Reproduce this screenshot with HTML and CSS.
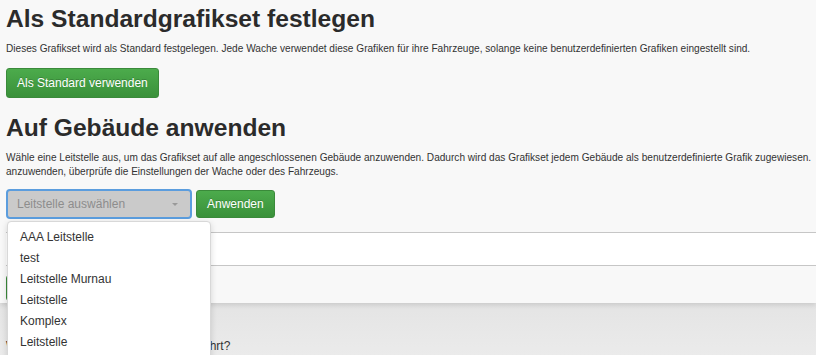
FILE: index.html
```html
<!DOCTYPE html>
<html lang="de">
<head>
    <meta charset="UTF-8">
    <title>Grafikset</title>
    <link rel="stylesheet" href="styles.css">
</head>
<body>
    <div class="page">
        <h1>Als Standardgrafikset festlegen</h1>
        <p class="text">Dieses Grafikset wird als Standard festgelegen. Jede Wache verwendet diese Grafiken für ihre Fahrzeuge, solange keine benutzerdefinierten Grafiken eingestellt sind.</p>
        <button class="btn btn-success">Als Standard verwenden</button>

        <h2 class="section-title">Auf Gebäude anwenden</h2>
        <p class="text">Wähle eine Leitstelle aus, um das Grafikset auf alle angeschlossenen Gebäude anzuwenden. Dadurch wird das Grafikset jedem Gebäude als benutzerdefinierte Grafik zugewiesen.<br>anzuwenden, überprüfe die Einstellungen der Wache oder des Fahrzeugs.</p>

        <div class="apply-row">
            <div class="select-wrap">
                <div class="select">
                    <span class="placeholder">Leitstelle auswählen</span>
                    <span class="caret"></span>
                </div>
                <ul class="dropdown">
                    <li>AAA Leitstelle</li>
                    <li>test</li>
                    <li>Leitstelle Murnau</li>
                    <li>Leitstelle</li>
                    <li>Komplex</li>
                    <li>Leitstelle</li>
                </ul>
            </div>
            <button class="btn btn-success btn-small">Anwenden</button>
        </div>

        <div class="input-box"></div>
        <div class="button-row">
            <button class="btn btn-success">Speichern</button>
        </div>
    </div>

    <div class="footer">
        <p>Was ist, wenn das Fahrzeug bereits fährt?</p>
    </div>
</body>
</html>
```

FILE: styles.css
```css
* {
    margin: 0;
    padding: 0;
    box-sizing: border-box;
}

body {
    font-family: 'Liberation Sans', Arial, sans-serif;
    background-color: #f9f9f9;
    color: #333;
    overflow: hidden;
    height: 355px;
}

.page {
    padding: 0 6px 2px;
    background-color: #f8f8f8;
    box-shadow: 0 2px 5px rgba(0,0,0,0.12);
    position: relative;
    z-index: 1;
}

h1,
h2 {
    font-size: 24.6px;
    font-weight: bold;
    line-height: 32px;
    color: #2b2b2b;
    padding-top: 3px;
}

.section-title {
    margin-top: 14px;
    padding-top: 0;
}

.text {
    font-size: 10.1px;
    line-height: 14px;
    margin-top: 7px;
    white-space: nowrap;
}

.btn {
    display: inline-block;
    font-family: 'Liberation Sans', Arial, sans-serif;
    font-size: 12px;
    color: #fff;
    border-radius: 3px;
    cursor: pointer;
    text-shadow: 0 -1px 0 rgba(0,0,0,0.2);
}

.btn-success {
    background: linear-gradient(#4cab4c, #3a913a);
    border: 1px solid #3a8a3a;
    height: 30px;
    padding: 0 10px;
    margin-top: 12px;
}

.btn-small {
    height: 28px;
    padding: 0 10px;
    margin-top: 1px;
}

.apply-row {
    display: flex;
    align-items: flex-start;
    gap: 4px;
    margin-top: 10px;
    position: relative;
    z-index: 2;
}

.select-wrap {
    position: relative;
}

.select {
    width: 186px;
    height: 30px;
    background-color: #cacaca;
    border: 2px solid #5b9dde;
    border-radius: 4px;
    display: flex;
    align-items: center;
    justify-content: space-between;
    padding: 0 12px 0 9px;
}

.placeholder {
    font-size: 12px;
    color: #8d8d8d;
}

.caret {
    border-left: 3px solid transparent;
    border-right: 3px solid transparent;
    border-top: 3px solid #999;
}

.dropdown {
    position: absolute;
    top: 32px;
    left: 1px;
    width: 204px;
    height: 140px;
    list-style: none;
    background-color: #fff;
    border: 1px solid #d8d8d8;
    border-radius: 4px 4px 0 0;
    box-shadow: 0 2px 6px rgba(0,0,0,0.15);
    padding-top: 5px;
}

.dropdown li {
    font-size: 12px;
    line-height: 21px;
    padding-left: 12px;
    color: #333;
}

.input-box {
    height: 34px;
    margin-top: 13px;
    margin-right: -6px;
    background-color: #fff;
    border-top: 1px solid #c6c6c6;
    border-bottom: 1px solid #c6c6c6;
}

.button-row {
    height: 35px;
}

.button-row .btn-success {
    margin-top: 9px;
    height: 26px;
}

.footer {
    height: 60px;
    background: linear-gradient(#e4e4e4, #ececec);
    padding: 36px 0 0 6px;
}

.footer p {
    font-size: 12px;
    color: #333;
}
```
